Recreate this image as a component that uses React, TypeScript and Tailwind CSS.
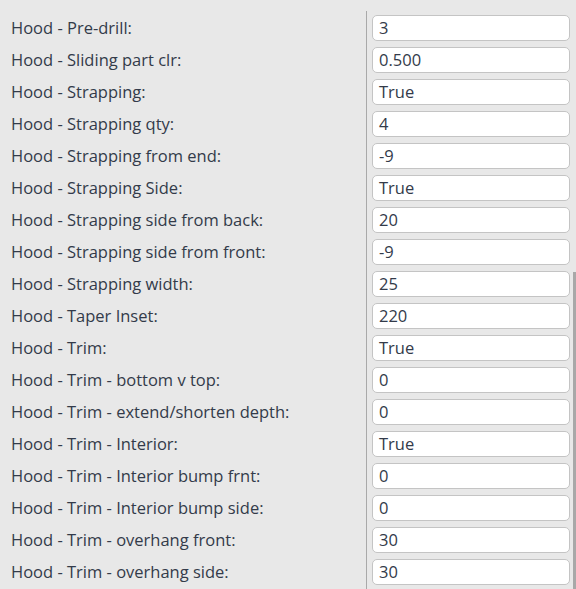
import React from "react";

const rows: [string, string][] = [
  ["Hood - Pre-drill:", "3"],
  ["Hood - Sliding part clr:", "0.500"],
  ["Hood - Strapping:", "True"],
  ["Hood - Strapping qty:", "4"],
  ["Hood - Strapping from end:", "-9"],
  ["Hood - Strapping Side:", "True"],
  ["Hood - Strapping side from back:", "20"],
  ["Hood - Strapping side from front:", "-9"],
  ["Hood - Strapping width:", "25"],
  ["Hood - Taper Inset:", "220"],
  ["Hood - Trim:", "True"],
  ["Hood - Trim - bottom v top:", "0"],
  ["Hood - Trim - extend/shorten depth:", "0"],
  ["Hood - Trim - Interior:", "True"],
  ["Hood - Trim - Interior bump frnt:", "0"],
  ["Hood - Trim - Interior bump side:", "0"],
  ["Hood - Trim - overhang front:", "30"],
  ["Hood - Trim - overhang side:", "30"],
];

export default function App() {
  return (
    <div
      className="relative w-[576px] h-[589px] overflow-hidden bg-[#e8e8e8] text-[16.5px] text-[#333b4a]"
      style={{ fontFamily: '"Open Sans", "Noto Sans", sans-serif' }}
    >
      <div className="flex pt-[11px]">
        <div className="w-[366px] pt-[5px] pl-[11px]">
          {rows.map(([label]) => (
            <div key={label} className="h-[32px] leading-[24px] whitespace-nowrap">
              {label}
            </div>
          ))}
        </div>
        <div className="w-[204px] border-l border-[#a9a9a9] pl-[5px] pt-[4px] h-[600px]">
          {rows.map(([label, value]) => (
            <div key={label} className="h-[32px]">
              <div className="h-[26px] w-[198px] rounded-[5px] border border-[#c4c4c4] bg-white pl-[6px] leading-[23px]">
                {value}
              </div>
            </div>
          ))}
        </div>
      </div>
      <div className="absolute right-0 top-[272px] bottom-0 w-[3px] bg-[#a8a8a8]" />
    </div>
  );
}
